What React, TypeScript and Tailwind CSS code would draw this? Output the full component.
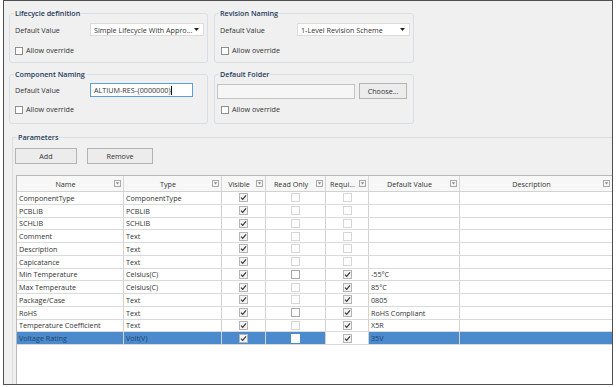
import React from "react";

const FilterIcon = () => (
  <svg width="7" height="7" viewBox="0 0 7 7" className="block">
    <rect x="0.5" y="0.5" width="6" height="6" fill="#f4f4f4" stroke="#a9a9a9" />
    <path d="M1.8 2.2 H5.2 L3.5 4.6 Z" fill="#8a8a8a" />
  </svg>
);

const CheckBoxDlg = () => (
  <span className="block w-[8px] h-[8px] border border-[#8e8f8f] bg-white shrink-0" />
);

const Check = ({ checked, dark, white }: { checked: boolean; dark?: boolean; white?: boolean }) => (
  <svg width="9" height="9" viewBox="0 0 9 9" className="block">
    <rect
      x="0.5"
      y="0.5"
      width="8"
      height="8"
      fill={checked ? "#f3f3f3" : "#ffffff"}
      stroke={white ? "#ffffff" : checked ? "#b4b4b4" : dark ? "#a8a8a8" : "#d6d6d6"}
    />
    {checked && <path d="M2 4.6 L3.7 6.3 L7 2.4" fill="none" stroke="#3a3a3a" strokeWidth="1.2" />}
  </svg>
);

const Arrow = () => (
  <svg width="5" height="3" viewBox="0 0 5 3" className="block">
    <path d="M0 0 H5 L2.5 3 Z" fill="#222" />
  </svg>
);

const Group = ({ title, children }: { title: string; children: React.ReactNode }) => (
  <div className="h-[50px] border border-[#d5dfe5] rounded-[3px] flex flex-col">
    <div className="-mt-[6px] ml-[4px] px-[1px] w-fit bg-[#f0f0f0] leading-[10px] font-semibold text-[#1e395b]">
      {title}
    </div>
    {children}
  </div>
);

const Allow = ({ mt, pl }: { mt: string; pl: string }) => (
  <div className={`flex items-center gap-[3px] h-[9px] ${mt} ${pl}`}>
    <CheckBoxDlg />
    <span className="leading-[9px] text-[#333]">Allow override</span>
  </div>
);

type Row = {
  name: string;
  type: string;
  req: boolean;
  def: string;
  roDark?: boolean;
  sel?: boolean;
};

const rows: Row[] = [
  { name: "ComponentType", type: "ComponentType", req: false, def: "" },
  { name: "PCBLIB", type: "PCBLIB", req: false, def: "" },
  { name: "SCHLIB", type: "SCHLIB", req: false, def: "" },
  { name: "Comment", type: "Text", req: false, def: "" },
  { name: "Description", type: "Text", req: false, def: "" },
  { name: "Capicatance", type: "Text", req: false, def: "" },
  { name: "Min Temperature", type: "Celsius(C)", req: true, def: "-55°C", roDark: true },
  { name: "Max Temperaute", type: "Celsius(C)", req: true, def: "85°C" },
  { name: "Package/Case", type: "Text", req: true, def: "0805" },
  { name: "RoHS", type: "Text", req: true, def: "RoHS Compliant", roDark: true },
  { name: "Temperature Coefficient", type: "Text", req: true, def: "X5R" },
  { name: "Voltage Rating", type: "Volt(V)", req: true, def: "35V", sel: true },
];

const cols = "grid grid-cols-[107px_98px_44px_60px_43px_91px_152px]";

const Header = ({ label }: { label: string }) => (
  <div className="grid grid-cols-[1fr_auto] items-center border-r border-[#d7d7d7] pr-[2px] last:border-r-0">
    <span className="text-center leading-[10px] text-[#333] whitespace-nowrap">{label}</span>
    <FilterIcon />
  </div>
);

export default function App() {
  return (
    <div className="w-[616px] h-[387px] bg-white font-['Open_Sans','Liberation_Sans',sans-serif] text-[7.2px] text-[#333]">
      <div className="ml-[3px] w-[610px] h-[385px] border border-[#4d4d4d] bg-[#f0f0f0] flex flex-col overflow-hidden">
        <div className="grid grid-cols-[199px_200px] gap-x-[6px] gap-y-[11px] ml-[5px] mt-[12px]">
          <Group title="Lifecycle definition">
            <div className="flex items-center mt-[5px] h-[13px] pl-[5px]">
              <span className="w-[75px] leading-[10px]">Default Value</span>
              <div className="w-[114px] h-[13px] bg-white border border-[#dcdcdc] flex items-center justify-between pl-[3px] pr-[4px]">
                <span className="leading-[10px] whitespace-nowrap">Simple Lifecycle With Appro...</span>
                <Arrow />
              </div>
            </div>
            <Allow mt="mt-[10px]" pl="pl-[5px]" />
          </Group>
          <Group title="Revision Naming">
            <div className="flex items-center mt-[5px] h-[13px] pl-[5px]">
              <span className="w-[77px] leading-[10px]">Default Value</span>
              <div className="w-[113px] h-[13px] bg-white border border-[#dcdcdc] flex items-center justify-between pl-[3px] pr-[4px]">
                <span className="leading-[10px] whitespace-nowrap">1-Level Revision Scheme</span>
                <Arrow />
              </div>
            </div>
            <Allow mt="mt-[10px]" pl="pl-[6px]" />
          </Group>
          <Group title="Component Naming">
            <div className="flex items-center mt-[4px] h-[14px] pl-[5px]">
              <span className="w-[75px] leading-[10px]">Default Value</span>
              <div className="w-[103px] h-[14px] bg-white border border-[#5b9ee0] flex items-center pl-[3px]">
                <span className="leading-[10px] whitespace-nowrap">ALTIUM-RES-{"{"}0000000{"}"}</span>
                <span className="w-[1px] h-[9px] bg-[#111]" />
              </div>
            </div>
            <Allow mt="mt-[8px]" pl="pl-[5px]" />
          </Group>
          <Group title="Default Folder">
            <div className="flex items-center gap-[4px] mt-[4px] h-[16px] pl-[2px]">
              <div className="w-[138px] h-[15px] bg-[#f6f6f6] border border-[#c4c4c4]" />
              <div className="w-[48px] h-[16px] border border-[#b4b4b4] bg-[#ececec] flex items-center justify-center leading-[10px]">
                Choose...
              </div>
            </div>
            <Allow mt="mt-[6px]" pl="pl-[6px]" />
          </Group>
        </div>

        <div className="ml-[8px] mt-[13px] flex-1 border-l border-t border-[#d5dfe5] flex flex-col min-h-0">
          <div className="-mt-[6px] ml-[4px] px-[1px] w-fit bg-[#f0f0f0] leading-[10px] font-semibold text-[#1e395b]">
            Parameters
          </div>
          <div className="flex gap-[10px] ml-[2px] mt-[6px]">
            <div className="w-[62px] h-[16px] border border-[#b4b4b4] bg-[#ececec] flex items-center justify-center leading-[10px]">
              Add
            </div>
            <div className="w-[66px] h-[16px] border border-[#b4b4b4] bg-[#ececec] flex items-center justify-center leading-[10px]">
              Remove
            </div>
          </div>
          <div className="ml-[3px] mt-[11px] flex-1 bg-white border-l border-t border-[#b9b9b9] flex flex-col">
            <div className={`${cols} h-[16px] border-b border-[#d2d2d2] bg-[#f7f7f7]`}>
              <Header label="Name" />
              <Header label="Type" />
              <Header label="Visible" />
              <Header label="Read Only" />
              <Header label="Requi..." />
              <Header label="Default Value" />
              <Header label="Description" />
            </div>
            {rows.map((r) => {
              const bg = r.sel ? "bg-[#4b8bcd]" : "bg-white";
              const tc = r.sel ? "text-[#21436c]" : "text-[#333]";
              const cell = `border-r border-[#d2d2d2] flex items-center ${bg}`;
              return (
                <div key={r.name} className={`${cols} h-[12.75px] border-b border-[#dadada]`}>
                  <div className={`${cell} pl-[2px] ${tc} leading-[10px] whitespace-nowrap`}>{r.name}</div>
                  <div className={`${cell} pl-[2px] ${tc} leading-[10px] whitespace-nowrap`}>{r.type}</div>
                  <div className={`${cell} justify-center`}>
                    <Check checked />
                  </div>
                  <div className={`${cell} justify-center`}>
                    <Check checked={false} dark={r.roDark} white={r.sel} />
                  </div>
                  <div className="border-r border-[#d2d2d2] flex items-center justify-center bg-white">
                    <Check checked={r.req} />
                  </div>
                  <div className={`${cell} pl-[2px] ${tc} leading-[10px] whitespace-nowrap`}>{r.def}</div>
                  <div className={`flex items-center ${bg}`} />
                </div>
              );
            })}
          </div>
        </div>
      </div>
    </div>
  );
}
